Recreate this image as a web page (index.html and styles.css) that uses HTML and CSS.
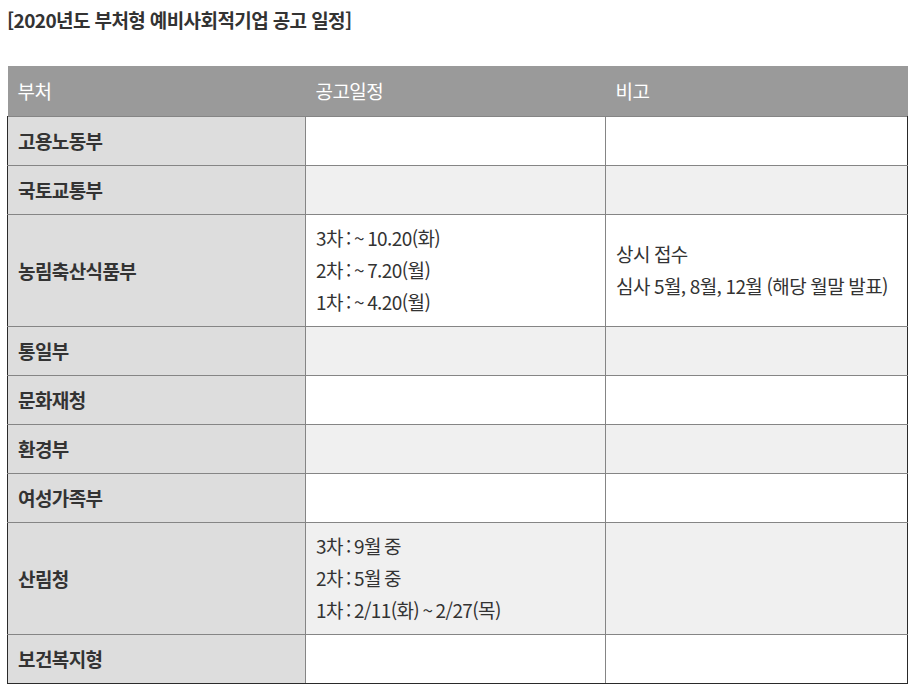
FILE: index.html
```html
<!DOCTYPE html>
<html lang="ko">
<head>
<meta charset="utf-8">
<link rel="stylesheet" href="styles.css">
</head>
<body>
<div class="page">
  <h2 class="title">[2020년도 부처형 예비사회적기업 공고 일정]</h2>
  <table class="schedule">
    <thead>
      <tr>
        <th class="c1">부처</th>
        <th class="c2">공고일정</th>
        <th class="c3">비고</th>
      </tr>
    </thead>
    <tbody>
      <tr><td class="dept">고용노동부</td><td></td><td></td></tr>
      <tr class="alt"><td class="dept">국토교통부</td><td></td><td></td></tr>
      <tr class="tall"><td class="dept">농림축산식품부</td><td><div class="lines dates"><span>3차 : ~ 10.20(화)</span><span>2차 : ~ 7.20(월)</span><span>1차 : ~ 4.20(월)</span></div></td><td><div class="lines note"><span>상시 접수</span><span>심사 5월, 8월, 12월 (해당 월말 발표)</span></div></td></tr>
      <tr class="alt"><td class="dept">통일부</td><td></td><td></td></tr>
      <tr><td class="dept">문화재청</td><td></td><td></td></tr>
      <tr class="alt"><td class="dept">환경부</td><td></td><td></td></tr>
      <tr><td class="dept">여성가족부</td><td></td><td></td></tr>
      <tr class="alt tall"><td class="dept">산림청</td><td><div class="lines dates"><span>3차 : 9월 중</span><span>2차 : 5월 중</span><span>1차 : 2/11(화) ~ 2/27(목)</span></div></td><td></td></tr>
      <tr><td class="dept">보건복지형</td><td></td><td></td></tr>
    </tbody>
  </table>
</div>
</body>
</html>
```

FILE: styles.css
```css
html, body {
  margin: 0;
  padding: 0;
  background: #ffffff;
}

body {
  font-family: "Noto Sans CJK KR", "Noto Sans", sans-serif;
  color: #333333;
}

.page {
  padding: 0 10px 0 7px;
}

.title {
  margin: 0;
  padding-top: 7px;
  height: 66px;
  box-sizing: border-box;
  font-size: 19px;
  font-weight: 700;
  letter-spacing: -0.6px;
  line-height: 26px;
  color: #333333;
}

.schedule {
  width: 900px;
  border-collapse: collapse;
  table-layout: fixed;
  font-size: 19px;
  letter-spacing: -0.6px;
}

.schedule th {
  background: #9a9a9a;
  color: #ffffff;
  font-weight: 400;
  text-align: left;
  height: 50px;
  padding: 0 0 0 10px;
  box-sizing: border-box;
  border: none;
}

.c1 { width: 298px; }
.c2 { width: 300px; }
.c3 { width: 302px; }

.schedule td {
  height: 49px;
  box-sizing: border-box;
  padding: 0 0 0 10px;
  border: 1px solid #858585;
  vertical-align: middle;
  background: #ffffff;
}

.schedule tr.alt td {
  background: #f0f0f0;
}

.schedule td.dept,
.schedule tr.alt td.dept {
  background: #dddddd;
  font-weight: 700;
}

.schedule tr.tall td {
  height: 112px;
}

.schedule tbody td:first-child {
  border-left: 1px solid #2a2a2a;
}

.schedule tbody td:last-child {
  border-right: 1px solid #2a2a2a;
}

.schedule tbody tr:last-child td {
  border-bottom: 1px solid #2a2a2a;
}

.lines {
  display: flex;
  flex-direction: column;
}

.lines span {
  line-height: 32px;
}

.dates {
  word-spacing: -1.5px;
}

.note {
  word-spacing: -0.5px;
}
```
